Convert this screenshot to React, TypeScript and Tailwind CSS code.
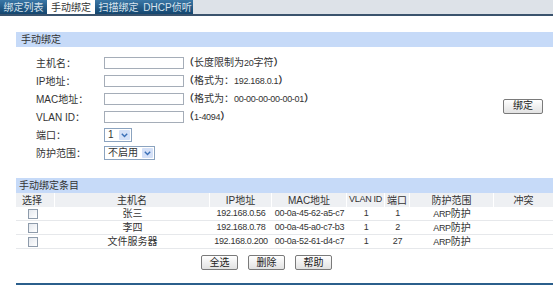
const font = { fontFamily: '"Liberation Sans", "Noto Sans CJK SC", sans-serif' };

// latin text in the reference is narrow, squeeze it a bit
const num = "text-[9px] tracking-[-0.3px]";

const tabs = [
  { label: "绑定列表", w: "w-[47px]", active: false },
  { label: "手动绑定", w: "w-[48px]", active: true },
  { label: "扫描绑定", w: "w-[47px]", active: false },
  { label: "DHCP侦听", w: "w-[51px]", active: false },
];

const rows = [
  { name: "张三", ip: "192.168.0.56", mac: "00-0a-45-62-a5-c7", vlan: "1", port: "1" },
  { name: "李四", ip: "192.168.0.78", mac: "00-0a-45-a0-c7-b3", vlan: "1", port: "2" },
  { name: "文件服务器", ip: "192.168.0.200", mac: "00-0a-52-61-d4-c7", vlan: "1", port: "27" },
];

const cols = ["w-[39px]", "w-[155px]", "w-[62px]", "w-[75px]", "w-[38px]", "w-[25px]", "w-[84px]", "flex-1"];

function Select({ value, width }: { value: string; width: string }) {
  return (
    <div className={`flex h-[14px] items-center border border-[#8ba3bf] bg-white ${width}`}>
      <span className="flex-1 whitespace-nowrap pl-[3px] leading-none">{value}</span>
      <span className="mr-[1px] flex h-[10px] w-[11px] items-center justify-center rounded-[1px] bg-[#d4e0f7]">
        <svg width="7" height="5" viewBox="0 0 7 5">
          <path d="M0.8 0.8 L3.5 3.6 L6.2 0.8" fill="none" stroke="#3b6fb6" strokeWidth="1.4" />
        </svg>
      </span>
    </div>
  );
}

function Btn({ children, cls = "" }: { children: React.ReactNode; cls?: string }) {
  return (
    <button
      className={`flex h-[15px] w-[37px] items-center justify-center rounded-[2px] border border-[#7a7a7a] bg-gradient-to-b from-white to-[#e2e2e2] text-[10px] leading-none text-[#222] ${cls}`}
    >
      {children}
    </button>
  );
}

function Check() {
  return <span className="block h-[10px] w-[10px] border border-[#8e9bab] bg-gradient-to-br from-[#e4e8ee] to-white" />;
}

export default function App() {
  const fields = [
    { label: "主机名：", pre: "长度限制为", n: "20", post: "字符" },
    { label: "IP地址：", pre: "格式为：", n: "192.168.0.1", post: "" },
    { label: "MAC地址：", pre: "格式为：", n: "00-00-00-00-00-01", post: "" },
    { label: "VLAN ID：", pre: "", n: "1-4094", post: "" },
  ];

  return (
    <div style={font} className="h-[287px] w-[553px] overflow-hidden whitespace-nowrap bg-white text-[10px] text-[#333]">
      {/* Tabs */}
      <div className="flex h-[16px] border-b-2 border-[#3a536d] bg-[#dde2e8]">
        {tabs.map((t) => (
          <div
            key={t.label}
            className={`flex h-[14px] items-center justify-center ${t.w} ${
              t.active
                ? "bg-white text-[#333]"
                : "bg-gradient-to-b from-[#3a77a6] to-[#14466f] text-[#d8e4ee]"
            }`}
          >
            {t.label}
          </div>
        ))}
      </div>

      <div className="ml-[16px] mt-[16px]">
        <div className="flex h-[15px] items-center bg-[#c6daf8] pl-[5px]">手动绑定</div>

        {/* Form */}
        <div className="flex items-center pt-[7px]">
          <div className="flex flex-col">
            {fields.map((f) => (
              <div key={f.label} className="flex h-[18px] items-center">
                <span className="w-[88px] pl-[20px]">{f.label}</span>
                <span className="h-[12px] w-[80px] border border-[#a5adb8] bg-white" />
                <span>
                  <b className="font-bold">（</b>
                  {f.pre}
                  <span className={num}>{f.n}</span>
                  {f.post}
                  <b className="font-bold">）</b>
                </span>
              </div>
            ))}
            <div className="flex h-[18px] items-center">
              <span className="w-[88px] pl-[20px]">端口：</span>
              <Select value="1" width="w-[28px]" />
            </div>
            <div className="flex h-[18px] items-center">
              <span className="w-[88px] pl-[20px]">防护范围：</span>
              <Select value="不启用" width="w-[51px]" />
            </div>
          </div>
          <Btn cls="ml-auto mr-[10px] mb-[4px] w-[40px]">绑定</Btn>
        </div>

        {/* Table */}
        <div className="mt-[16px]">
          <div className="flex h-[15px] items-center bg-[#c6daf8] pl-[3px]">手动绑定条目</div>
          <div className="flex h-[14px] items-center bg-[#eef0f3]">
            {["选择", "主机名", "IP地址", "MAC地址", "VLAN ID", "端口", "防护范围", "冲突"].map((h, i) => (
              <div
                key={h}
                className={`flex h-full items-center ${i === 0 ? "pl-[6px]" : "justify-center"} ${cols[i]} ${
                  i < 7 ? "border-r border-white" : ""
                }`}
              >
                {h === "VLAN ID" ? <span className={num}>{h}</span> : h}
              </div>
            ))}
          </div>
          {rows.map((r) => (
            <div key={r.name} className="flex h-[14px] items-center border-b border-[#e6e8eb]">
              <div className={`flex justify-start pl-[12px] ${cols[0]}`}>
                <Check />
              </div>
              <div className={`text-center ${cols[1]}`}>{r.name}</div>
              <div className={`text-center ${num} ${cols[2]}`}>{r.ip}</div>
              <div className={`text-center ${num} ${cols[3]}`}>{r.mac}</div>
              <div className={`text-center ${num} ${cols[4]}`}>{r.vlan}</div>
              <div className={`text-center ${num} ${cols[5]}`}>{r.port}</div>
              <div className={`text-center ${cols[6]}`}>
                <span className={num}>ARP</span>防护
              </div>
              <div className={cols[7]} />
            </div>
          ))}
          <div className="mt-[6px] flex gap-[10px] pl-[185px]">
            <Btn>全选</Btn>
            <Btn>删除</Btn>
            <Btn>帮助</Btn>
          </div>
          <div className="mt-[13px] h-[2px] bg-[#2b5f8c]" />
        </div>
      </div>
    </div>
  );
}
